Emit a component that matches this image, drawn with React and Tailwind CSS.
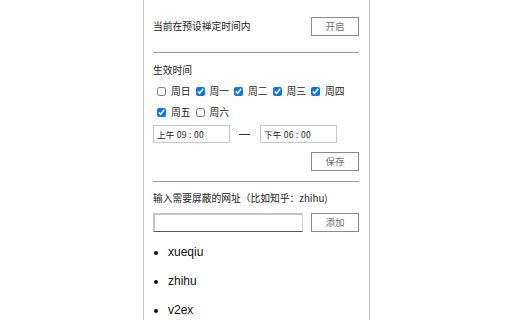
import React from "react";

const cjk = { fontFamily: '"Noto Sans CJK SC", "Noto Sans", sans-serif' };
const latin = { fontFamily: '"Liberation Sans", "Noto Sans CJK SC", sans-serif' };

function Btn({ children }) {
  return (
    <button
      className="w-[48px] h-[19px] border border-[#8a8a8a] bg-white text-[#6f6f6f] text-[9.5px] leading-none flex items-center justify-center shrink-0"
      style={cjk}
    >
      {children}
    </button>
  );
}

function Day({ label, checked }) {
  return (
    <label className="flex items-center mr-[1px]">
      <input
        type="checkbox"
        defaultChecked={checked}
        className="w-[9px] h-[9px] m-0 ml-[4px] mr-[5px] accent-[#0b75f5]"
      />
      <span className="text-[9.75px] text-[#222]">{label}</span>
    </label>
  );
}

function TimeBox({ text }) {
  return (
    <div className="w-[77px] h-[18px] border border-[#c8c8c8] bg-white flex items-center pl-[3px] text-[8.5px] text-[#222] tracking-[0.3px]">
      {text}
    </div>
  );
}

export default function App() {
  const days = [
    ["周日", false],
    ["周一", true],
    ["周二", true],
    ["周三", true],
    ["周四", true],
    ["周五", true],
    ["周六", false],
  ];
  return (
    <div className="w-[512px] h-[320px] bg-white overflow-hidden" style={cjk}>
      <div className="w-[227px] h-[320px] ml-[143px] border-x border-[#c4c4c4] pl-[9px] pr-[10px] text-[#222]">
        <div className="flex items-center justify-between pt-[17px] h-[52px] pb-[16px]">
          <span className="text-[9.75px]">当前在预设禅定时间内</span>
          <Btn>开启</Btn>
        </div>
        <div className="border-t border-[#9a9a9a]" />
        <div className="h-[28px] flex items-center pt-[6px] text-[9.75px]">生效时间</div>
        <div className="flex flex-wrap">
          {days.map(([l, c]) => (
            <div key={l} className="h-[21px] flex items-center">
              <Day label={l} checked={c} />
            </div>
          ))}
        </div>
        <div className="flex items-center mt-[2px] h-[18px]">
          <TimeBox text="上午 09 : 00" />
          <div className="w-[11px] h-px bg-[#333] ml-[9px] mr-[10px]" />
          <TimeBox text="下午 06 : 00" />
        </div>
        <div className="flex justify-end mt-[9px]">
          <Btn>保存</Btn>
        </div>
        <div className="border-t border-[#9a9a9a] mt-[10px]" />
        <div className="h-[31px] flex items-center pt-[2px] text-[9.75px]">
          输入需要屏蔽的网址（比如知乎：zhihu)
        </div>
        <div className="flex items-center justify-between">
          <div className="w-[150px] h-[19px] border-t-2 border-l-2 border-r border-b border-t-[#c4c4c4] border-l-[#c4c4c4] border-r-[#d8d8d8] border-b-[#555] bg-white" />
          <Btn>添加</Btn>
        </div>
        <ul className="list-disc pl-[15px] mt-[13px] text-[12px] text-[#111]" style={latin}>
          <li className="h-[29px] leading-[14px]">xueqiu</li>
          <li className="h-[29px] leading-[14px]">zhihu</li>
          <li className="h-[29px] leading-[14px]">v2ex</li>
        </ul>
      </div>
    </div>
  );
}
